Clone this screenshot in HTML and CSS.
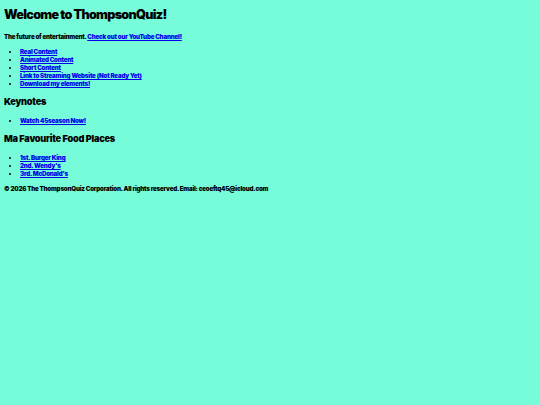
FILE: index.html
```html
<!DOCTYPE html>
<html>
<head>
<meta charset="utf-8">
<link rel="stylesheet" href="styles.css">
</head>
<body>
<h1 class="title">Welcome to ThompsonQuiz!</h1>
<p class="intro">The future of entertainment. <a href="#">Check out our YouTube Channel!</a></p>
<ul class="list">
<li><a href="#">Real Content</a></li>
<li><a href="#">Animated Content</a></li>
<li><a href="#">Short Content</a></li>
<li><a href="#">Link to Streaming Website (Not Ready Yet)</a></li>
<li><a href="#">Download my elements!</a></li>
</ul>
<h2 class="section">Keynotes</h2>
<ul class="list">
<li><a href="#">Watch 45season Now!</a></li>
</ul>
<h2 class="section food">Ma Favourite Food Places</h2>
<ul class="list">
<li><a href="#">1st. Burger King</a></li>
<li><a href="#">2nd. Wendy's</a></li>
<li><a href="#">3rd. McDonald's</a></li>
</ul>
<p class="footer">© 2026 The ThompsonQuiz Corporation. All rights reserved. Email: ceoeftq45@icloud.com</p>
</body>
</html>
```
FILE: styles.css
```css
html, body {
  background: #76fcd9;
}
body {
  margin: 4px;
  font-family: Inter, "Liberation Sans", sans-serif;
  font-weight: 900;
  font-size: 6.2px;
  letter-spacing: -0.22px;
  line-height: 8px;
  color: #000;
}
a {
  color: #0000ee;
}
.title {
  font-size: 12.6px;
  line-height: 18px;
  font-weight: 900;
  letter-spacing: -0.7px;
  margin: 2px 0 9px;
}
.intro {
  margin: 0 0 7px;
}
.list {
  margin: 0 0 6px;
  padding-left: 16px;
}
.section {
  font-size: 9.2px;
  line-height: 12px;
  font-weight: 900;
  letter-spacing: -0.25px;
  margin: 8px 0 9px;
}
.food {
  margin-top: 8px;
  margin-bottom: 9px;
}
.footer {
  margin: 7px 0 0;
}
```
